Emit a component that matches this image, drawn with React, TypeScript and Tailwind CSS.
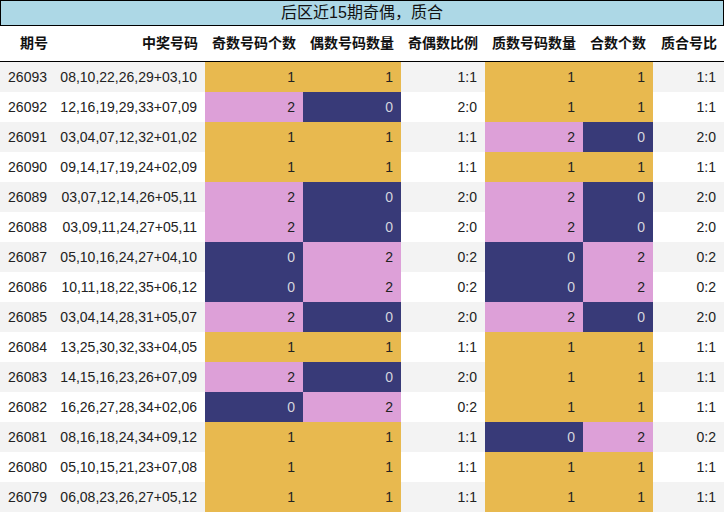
const rows: [string, string, number, number, number, number][] = [
    ["26093", "08,10,22,26,29+03,10", 1, 1, 1, 1],
    ["26092", "12,16,19,29,33+07,09", 2, 0, 1, 1],
    ["26091", "03,04,07,12,32+01,02", 1, 1, 2, 0],
    ["26090", "09,14,17,19,24+02,09", 1, 1, 1, 1],
    ["26089", "03,07,12,14,26+05,11", 2, 0, 2, 0],
    ["26088", "03,09,11,24,27+05,11", 2, 0, 2, 0],
    ["26087", "05,10,16,24,27+04,10", 0, 2, 0, 2],
    ["26086", "10,11,18,22,35+06,12", 0, 2, 0, 2],
    ["26085", "03,04,14,28,31+05,07", 2, 0, 2, 0],
    ["26084", "13,25,30,32,33+04,05", 1, 1, 1, 1],
    ["26083", "14,15,16,23,26+07,09", 2, 0, 1, 1],
    ["26082", "16,26,27,28,34+02,06", 0, 2, 1, 1],
    ["26081", "08,16,18,24,34+09,12", 1, 1, 0, 2],
    ["26080", "05,10,15,21,23+07,08", 1, 1, 1, 1],
    ["26079", "06,08,23,26,27+05,12", 1, 1, 1, 1],
];

const headers = ["期号", "中奖号码", "奇数号码个数", "偶数号码数量", "奇偶数比例", "质数号码数量", "合数个数", "质合号比"];

const GRID = "grid grid-cols-[55px_150px_98px_98px_84px_98px_70px_71px]";

function ColorCell({ n }: { n: number }) {
    const cls =
        n === 1 ? "bg-[#e8b94f] text-[#222]" :
        n === 2 ? "bg-[#dda0d8] text-[#222]" :
        "bg-[#383a78] text-[#d4d4dc]";
    return <div className={`${cls} flex items-center justify-end pr-[8px]`}>{n}</div>;
}

export default function App() {
    return (
        <div className="w-[724px] h-[513px] bg-white text-[#222] overflow-hidden" style={{ fontFamily: '"Liberation Sans", "Noto Sans CJK SC", sans-serif' }}>

            <div className="h-[26px] border border-black bg-[#add8e6] flex items-center justify-center text-[16px] text-[#111]">
                后区近15期奇偶，质合
            </div>

            <div className={`${GRID} h-[36px] border-b border-black font-bold text-[14px] text-[#111]`}>
                {headers.map((h) => (
                    <div key={h} className="flex items-center justify-end pr-[7px]">{h}</div>
                ))}
            </div>

            {rows.map((r, i) => {
                const stripe = i % 2 === 0 ? "bg-[#f3f3f3]" : "bg-white";
                return (
                    <div key={r[0]} className={`${GRID} h-[30px] text-[14px] ${stripe}`}>
                        <div className="flex items-center justify-end pr-[8px]">{r[0]}</div>
                        <div className="flex items-center justify-end pr-[8px]">{r[1]}</div>
                        <ColorCell n={r[2]} />
                        <ColorCell n={r[3]} />
                        <div className="flex items-center justify-end pr-[8px]">{r[2]}:{r[3]}</div>
                        <ColorCell n={r[4]} />
                        <ColorCell n={r[5]} />
                        <div className="flex items-center justify-end pr-[8px]">{r[4]}:{r[5]}</div>
                    </div>
                );
            })}

        </div>
    )
}
